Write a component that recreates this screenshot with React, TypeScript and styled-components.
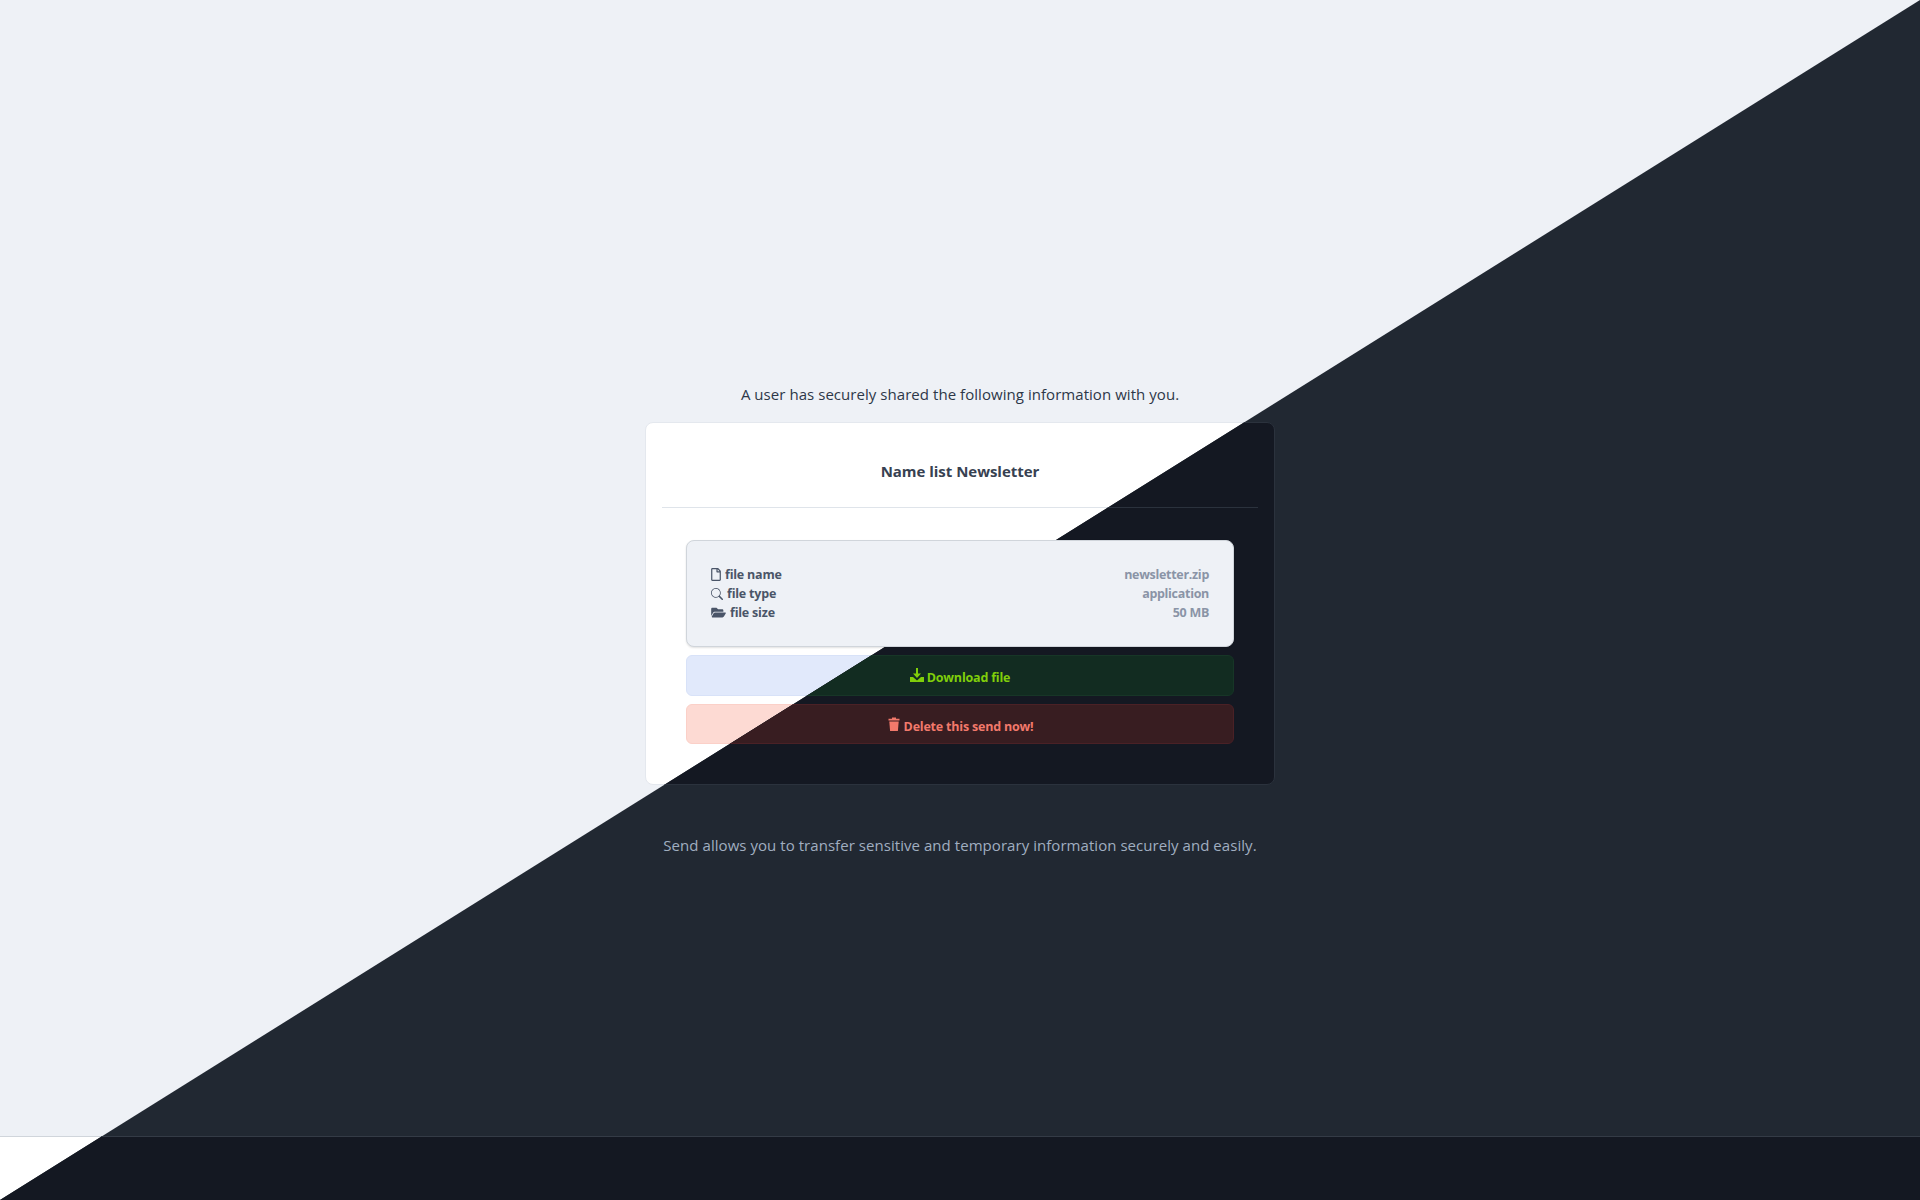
import React from 'react';
import styled, { createGlobalStyle } from 'styled-components';
import { FaFolderOpen, FaRegFile } from 'react-icons/fa';
import { BsSearch } from 'react-icons/bs';

type Tone = 'light' | 'dark';

const palette = {
  light: {
    page: '#eef1f6',
    card: '#ffffff',
    cardBorder: '#e4e8ee',
    divider: '#dfe4ea',
    footer: '#ffffff',
    footerBorder: '#d0d5db',
    lead: '#2d3748',
    note: '#2d3748',
    title: '#374151',
    downloadBg: '#e1e9fb',
    downloadBorder: '#d8e2f8',
    deleteBg: '#fddad3',
    deleteBorder: '#fbd0c8',
  },
  dark: {
    page: '#212832',
    card: '#141822',
    cardBorder: '#2b323d',
    divider: '#2b323d',
    footer: '#141822',
    footerBorder: '#343b46',
    lead: '#a0aec0',
    note: '#a0aec0',
    title: '#a0aec0',
    downloadBg: '#122c21',
    downloadBorder: '#173627',
    deleteBg: '#381d21',
    deleteBorder: '#4a2126',
  },
};

const GlobalStyle = createGlobalStyle`
  html, body {
    margin: 0;
    padding: 0;
    height: 100%;
    overflow: hidden;
  }
  body {
    font-family: "Open Sans", "Noto Sans", sans-serif;
  }
`;

const Stage = styled.div`
  position: relative;
  width: 100%;
  height: 1200px;
  overflow: hidden;
`;

const Sheet = styled.div<{ $tone: Tone }>`
  display: flex;
  flex-direction: column;
  height: 1200px;
  background: ${(p) => palette[p.$tone].page};
  ${(p) =>
    p.$tone === 'dark' &&
    `
    position: absolute;
    inset: 0;
    clip-path: polygon(100% 0, 100% 100%, 0 100%);
  `}
`;

const Main = styled.main`
  flex: 1;
  display: flex;
  flex-direction: column;
  align-items: center;
  padding-top: 383px;
`;

const Lead = styled.p<{ $tone: Tone }>`
  margin: 0 0 17px;
  font-size: 15px;
  letter-spacing: 0.05px;
  line-height: 22px;
  color: ${(p) => palette[p.$tone].lead};
`;

const Card = styled.section<{ $tone: Tone }>`
  box-sizing: border-box;
  width: 630px;
  height: 363px;
  padding: 0 16px;
  background: ${(p) => palette[p.$tone].card};
  border: 1px solid ${(p) => palette[p.$tone].cardBorder};
  border-radius: 8px;
`;

const Title = styled.h2<{ $tone: Tone }>`
  box-sizing: border-box;
  margin: 0;
  height: 85px;
  padding-top: 12px;
  display: flex;
  align-items: center;
  justify-content: center;
  font-size: 15px;
  letter-spacing: -0.03px;
  font-weight: 700;
  color: ${(p) => palette[p.$tone].title};
  border-bottom: 1px solid ${(p) => palette[p.$tone].divider};
`;

const Body = styled.div`
  display: flex;
  flex-direction: column;
  padding: 32px 24px 0;
`;

/* the box keeps its light look on both sides of the split, so one copy sits over the dark sheet */
const InfoBox = styled.div<{ $tone: Tone }>`
  box-sizing: border-box;
  padding: 24px;
  margin-bottom: 8px;
  background: #eef1f6;
  border: 1px solid #d0d5db;
  border-radius: 8px;
  box-shadow: 0 1px 2px rgba(0, 0, 0, 0.12);
  position: relative;
  z-index: 1;
  visibility: ${(p) => (p.$tone === 'light' ? 'visible' : 'hidden')};
`;

const InfoRow = styled.div`
  display: flex;
  justify-content: space-between;
  font-size: 12.5px;
  letter-spacing: -0.2px;
  line-height: 19px;
  font-weight: 700;
`;

const InfoLabel = styled.span`
  display: flex;
  align-items: center;
  gap: 4px;
  color: #4a5568;
`;

const InfoValue = styled.span`
  letter-spacing: -0.3px;
  color: #8a94a6;
`;

const FileIcon = styled(FaRegFile)`
  width: 10px;
  height: 13px;
`;

const SearchIcon = styled(BsSearch)`
  width: 12px;
  height: 12px;
`;

const FolderIcon = styled(FaFolderOpen)`
  width: 15px;
  height: 13px;
`;

const ActionButton = styled.button<{ $tone: Tone; $kind: 'download' | 'delete' }>`
  display: block;
  width: 100%;
  height: ${(p) => (p.$kind === 'download' ? '41px' : '40px')};
  padding: 3px 0 0;
  margin-bottom: 8px;
  font-family: inherit;
  font-size: 12.5px;
  letter-spacing: -0.2px;
  font-weight: 700;
  text-align: center;
  border-radius: 6px;
  color: ${(p) => (p.$kind === 'download' ? '#80cf0a' : '#f2796b')};
  background: ${(p) => palette[p.$tone][p.$kind === 'download' ? 'downloadBg' : 'deleteBg']};
  border: 1px solid ${(p) => palette[p.$tone][p.$kind === 'download' ? 'downloadBorder' : 'deleteBorder']};
`;

const ButtonIcon = styled.svg`
  width: 14px;
  height: 14px;
  margin-right: 3px;
  fill: currentColor;
`;

const Note = styled.p<{ $tone: Tone }>`
  margin: 49px 0 0;
  font-size: 15px;
  letter-spacing: 0.05px;
  line-height: 22px;
  color: ${(p) => palette[p.$tone].note};
`;

const Footer = styled.footer<{ $tone: Tone }>`
  box-sizing: border-box;
  height: 64px;
  background: ${(p) => palette[p.$tone].footer};
  border-top: 1px solid ${(p) => palette[p.$tone].footerBorder};
`;

const rows = [
  { icon: <FileIcon />, label: 'file name', value: 'newsletter.zip' },
  { icon: <SearchIcon />, label: 'file type', value: 'application' },
  { icon: <FolderIcon />, label: 'file size', value: '50 MB' },
];

const SendPage = ({ tone }: { tone: Tone }) => (
  <Sheet $tone={tone}>
    <Main>
      <Lead $tone={tone}>A user has securely shared the following information with you.</Lead>
      <Card $tone={tone}>
        <Title $tone={tone}>Name list Newsletter</Title>
        <Body>
          <InfoBox $tone={tone}>
            {rows.map((row) => (
              <InfoRow key={row.label}>
                <InfoLabel>
                  {row.icon}
                  {row.label}
                </InfoLabel>
                <InfoValue>{row.value}</InfoValue>
              </InfoRow>
            ))}
          </InfoBox>
          <ActionButton $tone={tone} $kind="download">
            <ButtonIcon viewBox="0 0 14 14">
              <path d="M6 0h2v5.5h3L7 10 3 5.5h3z" />
              <path d="M0 9h3l4 3.4L11 9h3v5H0z" />
            </ButtonIcon>
            Download file
          </ActionButton>
          <ActionButton $tone={tone} $kind="delete">
            <ButtonIcon viewBox="0 0 14 14">
              <path d="M5 .5h4v1.2h3.5v1.8h-11V1.700H5z" />
              <path d="M2.300 4.500h9.400l-.8 9.500H3.100z" />
            </ButtonIcon>
            Delete this send now!
          </ActionButton>
        </Body>
      </Card>
      <Note $tone={tone}>Send allows you to transfer sensitive and temporary information securely and easily.</Note>
    </Main>
    <Footer $tone={tone} />
  </Sheet>
);

export default function App() {
  return (
    <Stage>
      <GlobalStyle />
      <SendPage tone="light" />
      <SendPage tone="dark" />
    </Stage>
  );
}
